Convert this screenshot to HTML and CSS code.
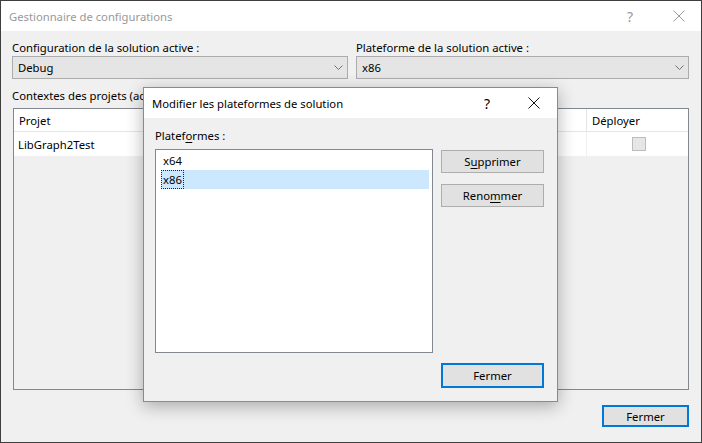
FILE: index.html
```html
<!DOCTYPE html>
<html lang="fr">
<head>
<meta charset="utf-8">
<title>Gestionnaire de configurations</title>
<link rel="stylesheet" href="styles.css">
</head>
<body>
<div class="window">
  <div class="titlebar">
    <span class="title">Gestionnaire de configurations</span>
    <span class="tb-help">?</span>
    <svg class="tb-close" width="12" height="12" viewBox="0 0 12 12"><path d="M0.5 0.5 L11.5 11.5 M11.5 0.5 L0.5 11.5" stroke="#9a9a9a" stroke-width="1" fill="none"/></svg>
  </div>
  <div class="body">
    <div class="combos">
      <div class="field">
        <div class="label">Configuration de la solution active :</div>
        <div class="combo"><span>Debug</span><svg width="9" height="6" viewBox="0 0 9 6"><path d="M0.5 0.5 L4.5 4.5 L8.5 0.5" stroke="#707070" fill="none"/></svg></div>
      </div>
      <div class="field">
        <div class="label">Plateforme de la solution active :</div>
        <div class="combo"><span>x86</span><svg width="9" height="6" viewBox="0 0 9 6"><path d="M0.5 0.5 L4.5 4.5 L8.5 0.5" stroke="#707070" fill="none"/></svg></div>
      </div>
    </div>
    <div class="label ctx">Contextes des projets (activer les cases à cocher pour générer ou déployer) :</div>
    <div class="grid">
      <div class="grow ghead">
        <div class="gcell c-proj">Projet</div>
        <div class="gcell c-conf">Configuration</div>
        <div class="gcell c-plat">Plateforme</div>
        <div class="gcell c-gen">Générer</div>
        <div class="gcell c-dep">Déployer</div>
      </div>
      <div class="grow gbody">
        <div class="gcell c-proj">LibGraph2Test</div>
        <div class="gcell c-conf">Debug</div>
        <div class="gcell c-plat">x86</div>
        <div class="gcell c-gen"></div>
        <div class="gcell c-dep"><span class="chk"></span></div>
      </div>
    </div>
    <div class="footer">
      <button class="btn default main-close">Fermer</button>
    </div>
  </div>

  <div class="modal">
    <div class="mtitlebar">
      <span class="mtitle">Modifier les plateformes de solution</span>
      <span class="mhelp">?</span>
      <svg class="mclose" width="12" height="12" viewBox="0 0 12 12"><path d="M0.5 0.5 L11.5 11.5 M11.5 0.5 L0.5 11.5" stroke="#111" stroke-width="1" fill="none"/></svg>
    </div>
    <div class="mbody">
      <div class="mrow">
        <div class="mleft">
          <div class="label">Platef<u>o</u>rmes :</div>
          <div class="listbox">
            <div class="item"><span class="itxt">x64</span></div>
            <div class="item sel"><span class="itxt focus">x86</span></div>
          </div>
        </div>
        <div class="mright">
          <button class="btn">S<u>u</u>pprimer</button>
          <button class="btn">Reno<u>m</u>mer</button>
        </div>
      </div>
      <div class="mfooter">
        <button class="btn default mclosebtn">Fermer</button>
      </div>
    </div>
  </div>
</div>
</body>
</html>
```

FILE: styles.css
```css
* { box-sizing: border-box; }
html, body { margin: 0; padding: 0; }
body {
  width: 702px;
  height: 443px;
  overflow: hidden;
  font-family: "Noto Sans", "Open Sans", sans-serif;
  font-size: 11.3px;
  color: #000;
}
.window {
  position: relative;
  width: 702px;
  height: 443px;
  border: 1px solid #3f3f3f;
  display: flex;
  flex-direction: column;
  background: #f0f0f0;
}
.titlebar {
  height: 30px;
  background: #fff;
  display: flex;
  align-items: center;
  flex-shrink: 0;
}
.title {
  color: #999;
  font-size: 11.25px;
  padding-left: 8px;
  flex: 1;
}
.tb-help {
  color: #9a9a9a;
  font-size: 14px;
  width: 14px;
  margin-right: 32px;
}
.tb-close { margin-right: 16px; }

.body {
  flex: 1;
  display: flex;
  flex-direction: column;
  padding: 9px 12px 15px 11px;
  min-height: 0;
}
.label {
  height: 16px;
  line-height: 16px;
  white-space: nowrap;
}
.combos {
  display: flex;
  gap: 8px;
}
.field { flex: 1; }
.field:first-child { flex: 0 0 336px; }
.combo {
  height: 23px;
  background: #e5e5e5;
  border: 1px solid #acacac;
  display: flex;
  align-items: center;
  justify-content: space-between;
  padding: 0 4px 0 5px;
}
.ctx {
  margin-top: 9px;
}
.grid {
  margin-top: 4px;
  margin-left: 1px;
  flex: 1;
  border: 1px solid #828790;
  background: #f0f0f0;
}
.grow {
  display: flex;
  background: #fff;
}
.ghead {
  height: 23px;
  border-bottom: 1px solid #e5e5e5;
}
.gbody { height: 24px; }
.gcell {
  display: flex;
  align-items: center;
  padding-left: 5px;
  border-right: 1px solid #e5e5e5;
  white-space: nowrap;
  overflow: hidden;
}
.gbody .gcell { border-right-color: #f0f0f0; padding-left: 4px; }
.c-proj { width: 200px; }
.c-conf { width: 160px; }
.c-plat { width: 120px; }
.c-gen { width: 93px; }
.c-dep { flex: 1; border-right: none; }
.gbody .c-dep { justify-content: center; padding-left: 0; }
.chk {
  width: 14px;
  height: 14px;
  background: #e6e6e6;
  border: 1px solid #bcbcbc;
  margin-left: 2px;
}
.footer {
  margin-top: 15px;
  display: flex;
  justify-content: flex-end;
}
.btn {
  font-family: inherit;
  font-size: 11.3px;
  color: #000;
  background: #e1e1e1;
  border: 1px solid #adadad;
  padding: 0;
  height: 23px;
  width: 103px;
  margin: 0;
}
.btn.default { border: 2px solid #0078d7; }
.main-close { width: 87px; height: 22px; }
.btn u { text-decoration: underline; text-underline-offset: 2px; }

/* modal dialog */
.modal {
  position: absolute;
  left: 142px;
  top: 86px;
  width: 415px;
  height: 315px;
  border: 1px solid #4a98e8;
  background: #f0f0f0;
  box-shadow: 0 4px 16px rgba(0,0,0,0.3);
  display: flex;
  flex-direction: column;
}
.mtitlebar {
  height: 30px;
  background: #fff;
  display: flex;
  align-items: center;
  flex-shrink: 0;
}
.mtitle {
  font-size: 11.25px;
  padding-left: 8px;
  flex: 1;
}
.mhelp {
  font-size: 14px;
  width: 14px;
  margin-right: 30px;
}
.mclose { margin-right: 17px; }
.mbody {
  flex: 1;
  display: flex;
  flex-direction: column;
  padding: 10px 13px 13px 11px;
  min-height: 0;
}
.mrow {
  flex: 1;
  display: flex;
  gap: 8px;
  min-height: 0;
}
.mleft {
  width: 278px;
  display: flex;
  flex-direction: column;
  gap: 5px;
}
.mleft u { text-underline-offset: 2px; }
.listbox {
  flex: 1;
  background: #fff;
  border: 1px solid #828790;
  padding: 1px 3px 1px 5px;
}
.item {
  height: 19px;
  display: flex;
  align-items: center;
}
.item.sel { background: #cce8ff; }
.itxt {
  padding: 0 1px 0 1px;
  height: 19px;
  line-height: 17px;
  border: 1px dotted transparent;
}
.itxt.focus { border-color: #222; }
.mright {
  margin-top: 22px;
  display: flex;
  flex-direction: column;
  gap: 11px;
}
.mfooter {
  margin-top: 10px;
  display: flex;
  justify-content: flex-end;
}
.mclosebtn { height: 25px; }
```
